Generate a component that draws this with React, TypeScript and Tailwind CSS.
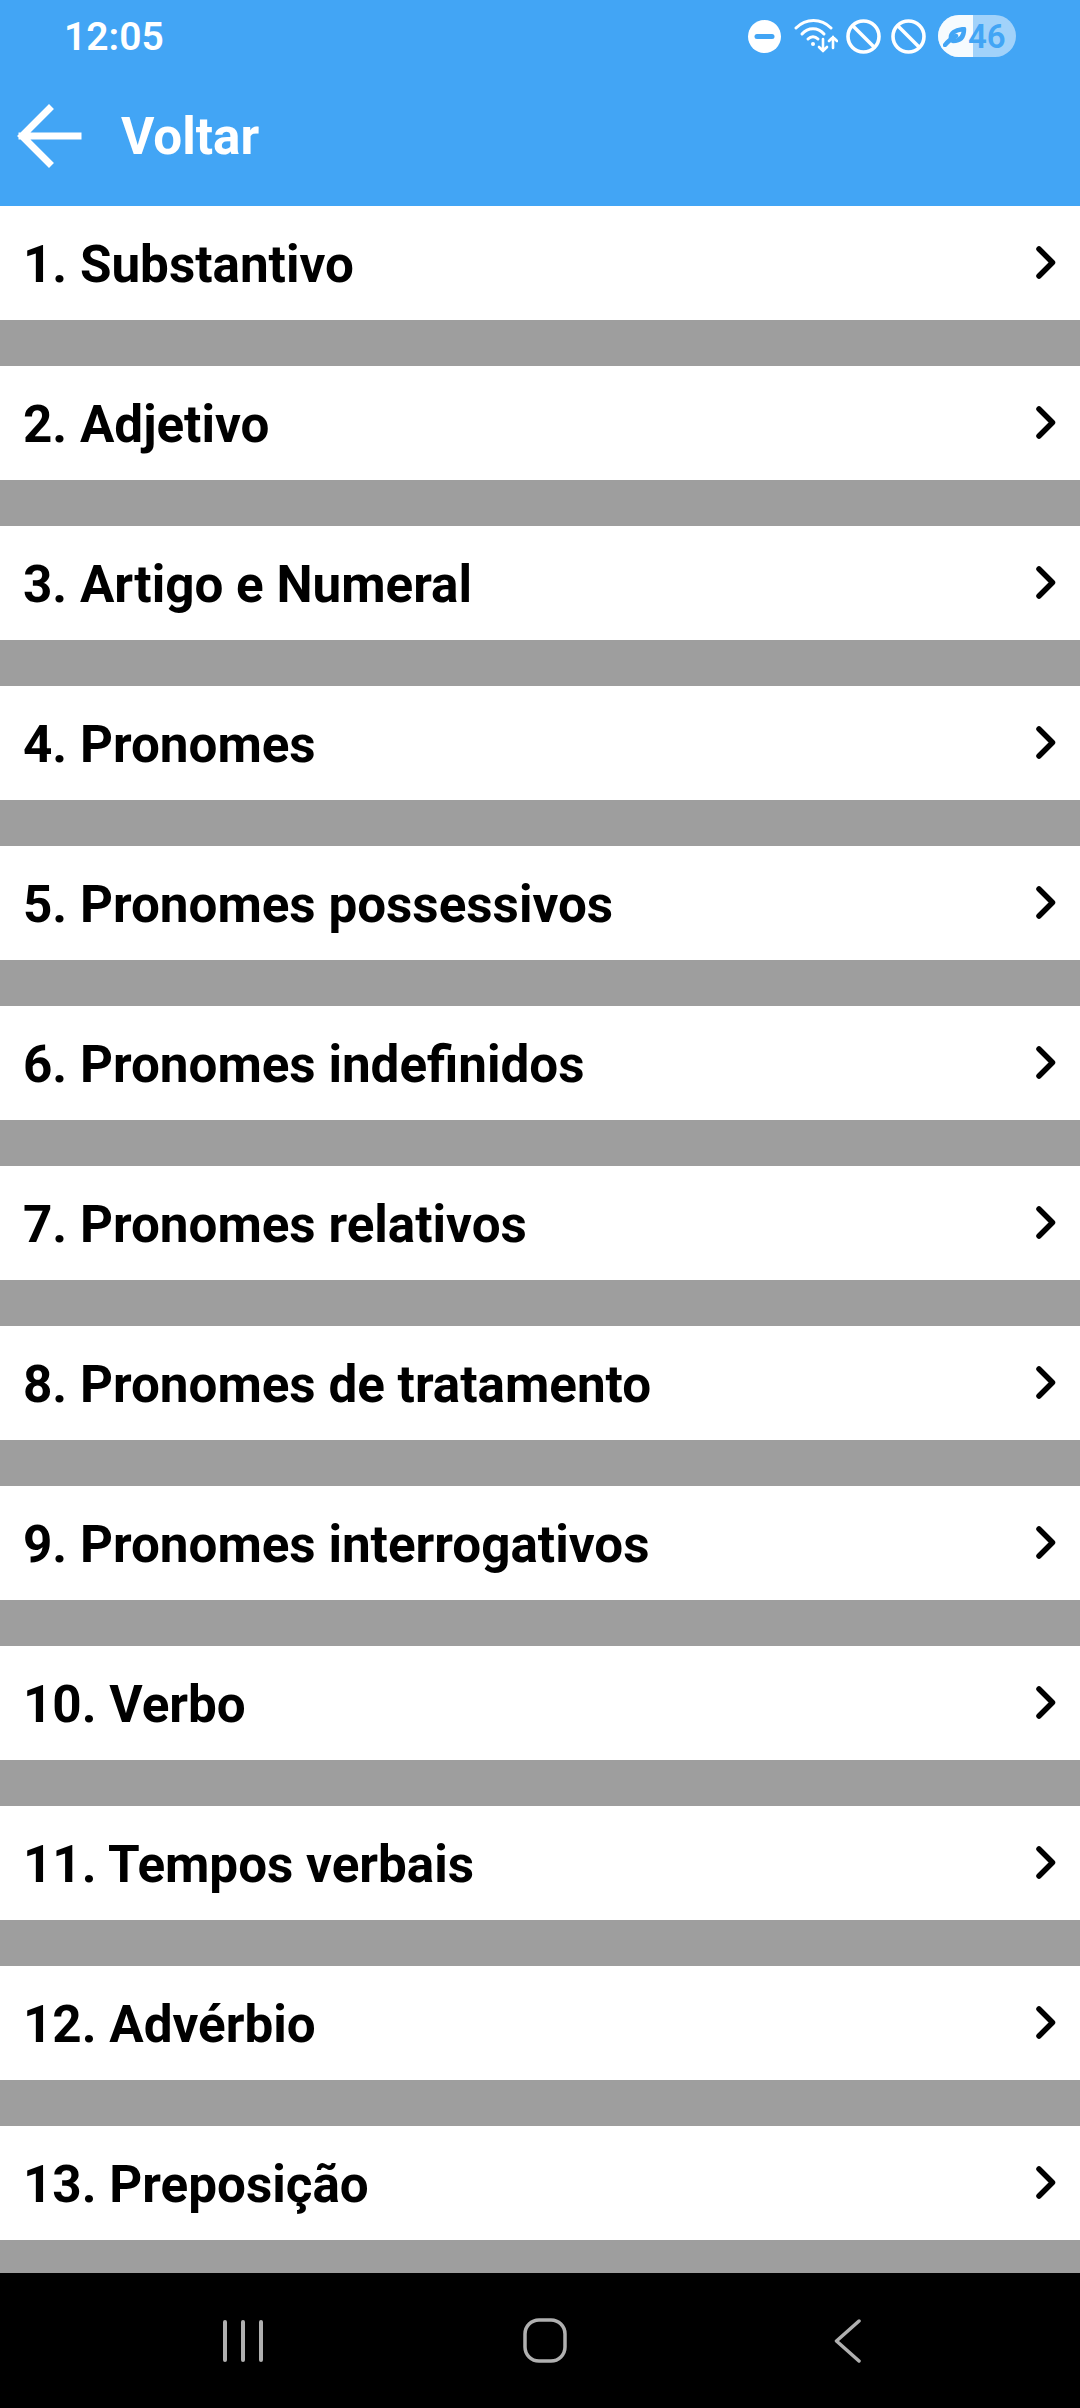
const topics = [
  '1. Substantivo',
  '2. Adjetivo',
  '3. Artigo e Numeral',
  '4. Pronomes',
  '5. Pronomes possessivos',
  '6. Pronomes indefinidos',
  '7. Pronomes relativos',
  '8. Pronomes de tratamento',
  '9. Pronomes interrogativos',
  '10. Verbo',
  '11. Tempos verbais',
  '12. Advérbio',
  '13. Preposição',
]

function Blocked() {
  return (
    <svg width="35" height="35" viewBox="0 0 35 35" fill="none" stroke="white" strokeWidth="3.6">
      <circle cx="17.5" cy="17.5" r="15.5" />
      <path d="M6.5 6.5l22 22" />
    </svg>
  )
}

function StatusBar() {
  return (
    <div className="flex h-[72px] items-center justify-between pl-[64px] pr-[64px]">
      <span className="pt-[2px] text-[39px] font-semibold leading-none text-white">12:05</span>
      <div className="flex items-center">
        {/* do not disturb */}
        <svg width="33" height="33" viewBox="0 0 33 33" className="mr-[13px]">
          <circle cx="16.5" cy="16.5" r="16.5" fill="white" />
          <rect x="6.5" y="14" width="20" height="5" rx="2.5" fill="#42a5f5" />
        </svg>
        {/* wifi with arrows */}
        <svg width="44" height="34" viewBox="0 0 44 34" fill="none" stroke="white" strokeWidth="3" strokeLinecap="round" className="mr-[8px]">
          <path d="M2 9C12 -1 27 -1 37 9" />
          <path d="M8 15C14 8 24 8 30 15" />
          <path d="M14 20C17 17 21 17 24 20" />
          <circle cx="19" cy="25" r="2" fill="white" stroke="none" />
          <path d="M29 20v12M25 28l4 4 4-4" strokeWidth="2.6" />
          <path d="M39 29V18M35 22l4-4 4 4" strokeWidth="2.6" />
        </svg>
        <Blocked />
        <div className="w-[10px]" />
        <Blocked />
        <div className="w-[12px]" />
        {/* battery saver pill */}
        <div className="relative flex h-[42px] w-[78px] items-center overflow-hidden rounded-[21px] bg-white/50">
          <div className="absolute inset-y-0 left-0 w-[35px] bg-white/90" />
          <svg width="24" height="20" viewBox="0 0 24 20" className="absolute left-[5px] top-[12px]" fill="none" stroke="#42a5f5" strokeWidth="4.5" strokeLinecap="round" strokeLinejoin="round">
            <path d="M8 12C7 6 12 3 21 2C21 10 17 14 10 14" />
            <path d="M2 18C5 14 8 12 13 9" />
          </svg>
          <span className="absolute left-[30px] text-[33px] font-semibold leading-none text-[#42a5f5]">46</span>
        </div>
      </div>
    </div>
  )
}

function NavBar() {
  return (
    <div className="flex h-[135px] shrink-0 items-center bg-black pl-[223px]">
      <svg width="41" height="42" viewBox="0 0 41 42" fill="none" stroke="#b0b0b0" strokeWidth="4" strokeLinecap="round">
        <path d="M2 2v38M20 2v38M38 2v38" />
      </svg>
      <svg width="44" height="45" viewBox="0 0 44 45" fill="none" stroke="#b0b0b0" strokeWidth="3.5" className="ml-[259px]">
        <rect x="2" y="2" width="40" height="41" rx="14" />
      </svg>
      <svg width="27" height="44" viewBox="0 0 27 44" fill="none" stroke="#b0b0b0" strokeWidth="3.5" strokeLinecap="round" strokeLinejoin="round" className="ml-[267px]">
        <path d="M25 2L2.5 22L25 42" />
      </svg>
    </div>
  )
}

export default function App() {
  return (
    <div className="flex h-[2408px] w-[1080px] flex-col overflow-hidden bg-[#9e9e9e] font-['Roboto',sans-serif]">
      <div className="h-[206px] shrink-0 bg-[#42a5f5]">
        <StatusBar />
        <div className="flex h-[134px] items-center pb-[6px]">
          <svg width="66" height="64" viewBox="0 0 66 64" fill="none" stroke="white" strokeWidth="7" strokeLinecap="square" className="ml-[16px]">
            <path d="M62 32H6M33 5L6 32l27 27" />
          </svg>
          <span className="ml-[39px] pt-[2px] text-[51.2px] font-bold leading-none text-white">Voltar</span>
        </div>
      </div>

      <div className="flex flex-1 flex-col gap-[46px] overflow-hidden">
        {topics.map((topic) => (
          <div key={topic} className="flex h-[114px] shrink-0 items-center justify-between bg-white pl-[23px] pr-[23px]">
            <span className="pt-[3px] text-[51.2px] font-bold leading-none text-black">{topic}</span>
            <svg width="24" height="36" viewBox="0 0 24 36" fill="none" stroke="black" strokeWidth="5.5" strokeLinecap="round" strokeLinejoin="round">
              <path d="M6 4L19.5 17.5L6 31" />
            </svg>
          </div>
        ))}
      </div>

      <NavBar />
    </div>
  )
}
